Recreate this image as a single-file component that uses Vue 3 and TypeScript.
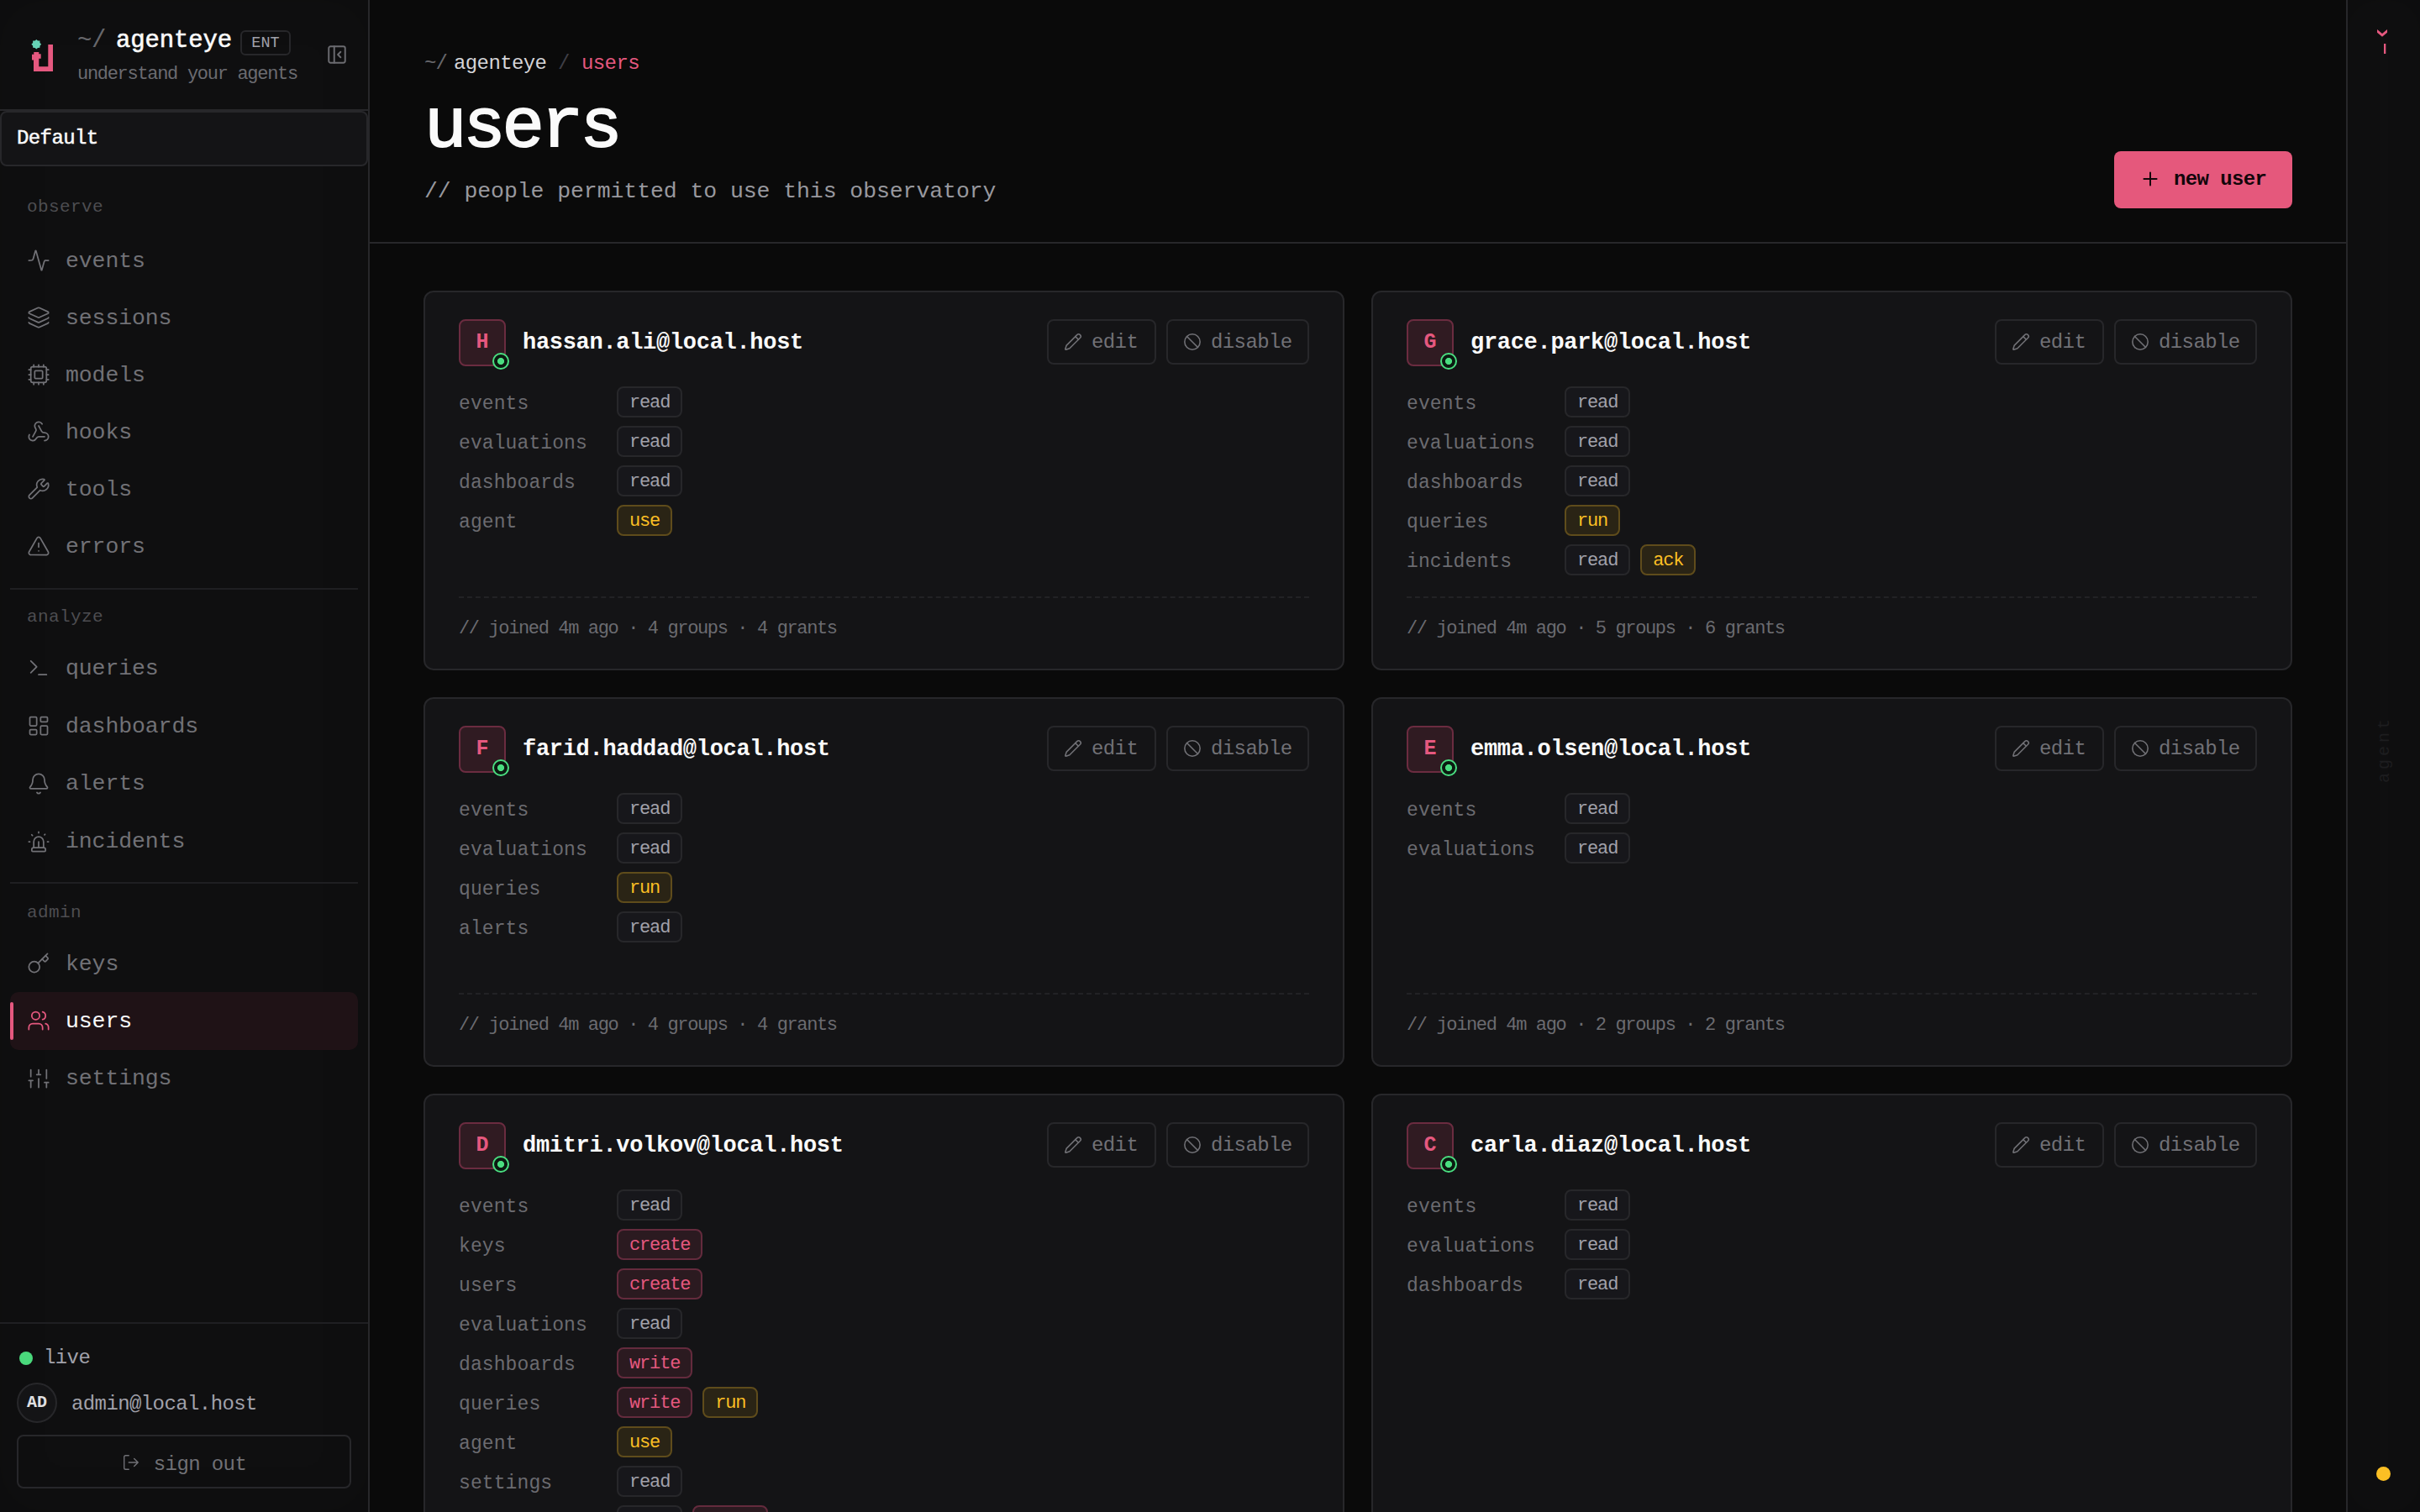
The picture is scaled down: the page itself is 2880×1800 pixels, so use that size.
<script setup lang="ts">
interface NavItem { label: string; icon: string; active?: boolean }
interface NavGroup { title: string; cls: string; items: NavItem[] }
interface Perm { group: string; grants: string[] }
interface User { email: string; perms: Perm[]; meta: string }

const icons: Record<string, string> = {
  activity: '<path d="M22 12h-2.48a2 2 0 0 0-1.93 1.46l-2.35 8.36a.25.25 0 0 1-.48 0L9.24 2.18a.25.25 0 0 0-.48 0l-2.35 8.36A2 2 0 0 1 4.49 12H2"/>',
  layers: '<path d="M12.83 2.18a2 2 0 0 0-1.66 0L2.6 6.08a1 1 0 0 0 0 1.83l8.58 3.91a2 2 0 0 0 1.66 0l8.58-3.9a1 1 0 0 0 0-1.83z"/><path d="M2 12a1 1 0 0 0 .58.91l8.6 3.91a2 2 0 0 0 1.65 0l8.58-3.9A1 1 0 0 0 22 12"/><path d="M2 17a1 1 0 0 0 .58.91l8.6 3.91a2 2 0 0 0 1.65 0l8.58-3.9A1 1 0 0 0 22 17"/>',
  cpu: '<path d="M12 20v2M12 2v2M17 20v2M17 2v2M2 12h2M2 17h2M2 7h2M20 12h2M20 17h2M20 7h2M7 20v2M7 2v2"/><rect x="4" y="4" width="16" height="16" rx="2"/><rect x="8" y="8" width="8" height="8" rx="1"/>',
  webhook: '<path d="M18 16.98h-5.99c-1.1 0-1.95.94-2.48 1.9A4 4 0 0 1 2 17c.01-.7.2-1.4.57-2"/><path d="m6 17 3.13-5.78c.53-.97.1-2.18-.5-3.1a4 4 0 1 1 6.89-4.06"/><path d="m12 6 3.13 5.73C15.66 12.7 16.9 13 18 13a4 4 0 0 1 0 8"/>',
  wrench: '<path d="M14.7 6.3a1 1 0 0 0 0 1.4l1.6 1.6a1 1 0 0 0 1.4 0l3.106-3.105c.32-.322.863-.22.983.218a6 6 0 0 1-8.259 7.057l-7.91 7.91a1 1 0 0 1-2.999-3l7.91-7.91a6 6 0 0 1 7.057-8.259c.438.12.54.662.219.984z"/>',
  alert: '<path d="m21.73 18-8-14a2 2 0 0 0-3.48 0l-8 14A2 2 0 0 0 4 21h16a2 2 0 0 0 1.73-3"/><path d="M12 9v4M12 17h.01"/>',
  terminal: '<path d="m4 17 6-6-6-6M12 19h8"/>',
  dashboard: '<rect x="3" y="3" width="7" height="9" rx="1"/><rect x="14" y="3" width="7" height="5" rx="1"/><rect x="14" y="12" width="7" height="9" rx="1"/><rect x="3" y="16" width="7" height="5" rx="1"/>',
  bell: '<path d="M10.268 21a2 2 0 0 0 3.464 0"/><path d="M3.262 15.326A1 1 0 0 0 4 17h16a1 1 0 0 0 .74-1.673C19.41 13.956 18 12.499 18 8A6 6 0 0 0 6 8c0 4.499-1.411 5.956-2.738 7.326"/>',
  siren: '<path d="M7 18v-6a5 5 0 1 1 10 0v6"/><path d="M5 21a1 1 0 0 0 1 1h12a1 1 0 0 0 1-1v-1a2 2 0 0 0-2-2H7a2 2 0 0 0-2 2z"/><path d="M21 12h1M18.5 4.5 18 5M2 12h1M12 2v1M4.929 4.929l.707.707M12 12v6"/>',
  key: '<path d="m15.5 7.5 2.3 2.3a1 1 0 0 0 1.4 0l2.1-2.1a1 1 0 0 0 0-1.4L19 4"/><path d="m21 2-9.6 9.6"/><circle cx="7.5" cy="15.5" r="5.5"/>',
  users: '<path d="M16 21v-2a4 4 0 0 0-4-4H6a4 4 0 0 0-4 4v2"/><circle cx="9" cy="7" r="4"/><path d="M22 21v-2a4 4 0 0 0-3-3.87M16 3.13a4 4 0 0 1 0 7.75"/>',
  sliders: '<path d="M4 21v-7M4 10V3M12 21v-9M12 8V3M20 21v-5M20 12V3M2 14h4M10 8h4M18 16h4"/>',
  panel: '<rect x="3" y="3" width="18" height="18" rx="2"/><path d="M9 3v18M16 15l-3-3 3-3"/>',
  logout: '<path d="m16 17 5-5-5-5M21 12H9M9 21H5a2 2 0 0 1-2-2V5a2 2 0 0 1 2-2h4"/>',
  plus: '<path d="M5 12h14M12 5v14"/>',
  pencil: '<path d="M21.174 6.812a1 1 0 0 0-3.986-3.987L3.842 16.174a2 2 0 0 0-.5.83l-1.321 4.352a.5.5 0 0 0 .623.622l4.353-1.32a2 2 0 0 0 .83-.497z"/><path d="m15 5 4 4"/>',
  ban: '<circle cx="12" cy="12" r="10"/><path d="m4.9 4.9 14.2 14.2"/>',
}

const groups: NavGroup[] = [
  { title: 'observe', cls: 'g-observe', items: [
    { label: 'events', icon: 'activity' }, { label: 'sessions', icon: 'layers' },
    { label: 'models', icon: 'cpu' }, { label: 'hooks', icon: 'webhook' },
    { label: 'tools', icon: 'wrench' }, { label: 'errors', icon: 'alert' },
  ] },
  { title: 'analyze', cls: 'g-analyze', items: [
    { label: 'queries', icon: 'terminal' }, { label: 'dashboards', icon: 'dashboard' },
    { label: 'alerts', icon: 'bell' }, { label: 'incidents', icon: 'siren' },
  ] },
  { title: 'admin', cls: 'g-admin', items: [
    { label: 'keys', icon: 'key' }, { label: 'users', icon: 'users', active: true },
    { label: 'settings', icon: 'sliders' },
  ] },
]

const p = (group: string, ...grants: string[]): Perm => ({ group, grants })

const users: User[] = [
  { email: 'hassan.ali@local.host', meta: '4 groups · 4 grants', perms: [p('events', 'read'), p('evaluations', 'read'), p('dashboards', 'read'), p('agent', 'use')] },
  { email: 'grace.park@local.host', meta: '5 groups · 6 grants', perms: [p('events', 'read'), p('evaluations', 'read'), p('dashboards', 'read'), p('queries', 'run'), p('incidents', 'read', 'ack')] },
  { email: 'farid.haddad@local.host', meta: '4 groups · 4 grants', perms: [p('events', 'read'), p('evaluations', 'read'), p('queries', 'run'), p('alerts', 'read')] },
  { email: 'emma.olsen@local.host', meta: '2 groups · 2 grants', perms: [p('events', 'read'), p('evaluations', 'read')] },
  { email: 'dmitri.volkov@local.host', meta: '', perms: [p('events', 'read'), p('keys', 'create'), p('users', 'create'), p('evaluations', 'read'), p('dashboards', 'write'), p('queries', 'write', 'run'), p('agent', 'use'), p('settings', 'read'), p('', 'read', 'write')] },
  { email: 'carla.diaz@local.host', meta: '', perms: [p('events', 'read'), p('evaluations', 'read'), p('dashboards', 'read')] },
]

const tone = (grant: string): string =>
  ['run', 'use', 'ack'].includes(grant) ? 'amber' : ['create', 'write'].includes(grant) ? 'pink' : 'plain'
</script>

<template>
  <div class="app">
    <aside class="sidebar">
      <header class="brand">
        <svg class="logo" viewBox="0 0 30 44" width="30" height="44">
          <path d="M7.3 2l1.7 1.6 2.4-.1.1 2.4 1.7 1.8-1.7 1.7-.1 2.4-2.4.1-1.7 1.7-1.7-1.7-2.4-.1-.1-2.4L1.4 7.700l1.700-1.800.1-2.400 2.400.1z" fill="#66d3b6" />
          <path d="M4.300 17h6v2.300h2.400v5.500h-2.400v9.500h11V8h5.700v32H4V26.500H2v-6.700h2.300z" fill="#e5587f" />
        </svg>
        <div class="brand-text">
          <div class="brand-row">
            <span class="tilde">~/</span><span class="name">agenteye</span><span class="ent">ENT</span>
          </div>
          <div class="tagline">understand your agents</div>
        </div>
        <svg class="ico collapse" viewBox="0 0 24 24" v-html="icons.panel" />
      </header>
      <div class="org"><span>Default</span></div>
      <nav class="nav">
        <section v-for="g in groups" :key="g.title" :class="['group', g.cls]">
          <div class="group-title">{{ g.title }}</div>
          <div class="items">
            <a v-for="i in g.items" :key="i.label" :class="['item', { active: i.active }]">
              <svg class="ico" viewBox="0 0 24 24" v-html="icons[i.icon]" />
              <span>{{ i.label }}</span>
            </a>
          </div>
        </section>
      </nav>
      <footer class="side-foot">
        <div class="live"><i></i><span>live</span></div>
        <div class="me"><b>AD</b><span>admin@local.host</span></div>
        <button class="signout"><svg class="ico" viewBox="0 0 24 24" v-html="icons.logout" /><span>sign out</span></button>
      </footer>
    </aside>

    <main class="main">
      <header class="head">
        <div>
          <div class="crumbs"><span class="c-root">~/</span><span class="c-app">agenteye</span><span class="c-sep">/</span><span class="c-here">users</span></div>
          <h1>users</h1>
          <p class="sub">// people permitted to use this observatory</p>
        </div>
        <button class="new"><svg class="ico" viewBox="0 0 24 24" v-html="icons.plus" /><span>new user</span></button>
      </header>
      <div class="grid">
        <article v-for="u in users" :key="u.email" class="card">
          <div class="card-head">
            <div class="avatar">{{ u.email[0].toUpperCase() }}<i class="dot"></i></div>
            <div class="email">{{ u.email }}</div>
            <button class="btn edit"><svg class="ico" viewBox="0 0 24 24" v-html="icons.pencil" /><span>edit</span></button>
            <button class="btn disable"><svg class="ico" viewBox="0 0 24 24" v-html="icons.ban" /><span>disable</span></button>
          </div>
          <div class="perms">
            <div v-for="(r, n) in u.perms" :key="n" class="perm">
              <span class="perm-name">{{ r.group }}</span>
              <span v-for="x in r.grants" :key="x" :class="['chip', tone(x)]">{{ x }}</span>
            </div>
          </div>
          <div v-if="u.meta" class="meta">// joined 4m ago · {{ u.meta }}</div>
        </article>
      </div>
    </main>

    <aside class="rail">
      <svg class="prompt" viewBox="0 0 16 32" width="16" height="32">
        <path d="M2 1v3.800L8 9.800l6-5V1L8 6z" fill="#e5587f" />
        <path d="M10 18h2.300v12H10z" fill="#e5587f" />
      </svg>
      <span class="rail-label">agent</span>
      <i class="rail-dot"></i>
    </aside>
  </div>
</template>

<style>
body { background: #0a0a0a; overflow: hidden; }
</style>

<style scoped>
.app { display: flex; width: 2880px; height: 1800px; overflow: hidden; background: #0a0a0a; font-family: "Liberation Mono", "DejaVu Sans Mono", monospace; color: #fafafa; font-size: 24px; letter-spacing: -.6px; }
.app *, .app { box-sizing: border-box; }
button { font-family: inherit; letter-spacing: inherit; background: none; padding: 0; margin: 0; }
.ico { width: 28px; height: 28px; flex: none; fill: none; stroke: currentColor; stroke-width: 1.5; stroke-linecap: round; stroke-linejoin: round; }

.sidebar { width: 440px; flex: none; display: flex; flex-direction: column; background: #0f0f10; border-right: 2px solid #27272a; box-shadow: inset 0 0 60px rgba(0, 0, 0, .14); }
.brand { height: 132px; flex: none; display: flex; align-items: flex-start; border-bottom: 2px solid #27272a; }
.logo { margin: 45px 0 0 36px; }
.brand-text { margin: 28px 0 0 26px; width: 296px; }
.brand-row { display: flex; height: 40px; line-height: 42px; font-size: 29px; white-space: nowrap; }
.tilde { color: #67676b; width: 46px; letter-spacing: -.3px; }
.name { width: 148px; letter-spacing: -.15px; -webkit-text-stroke: .6px currentColor; }
.ent { height: 30px; width: 60px; margin-top: 8px; line-height: 27px; border: 2px solid #27272a; border-radius: 6px; font-size: 18.500px; letter-spacing: .1px; color: #a1a1aa; text-align: center; }
.tagline { margin-top: 7px; line-height: 28px; font-size: 22px; letter-spacing: -1.300px; color: #6b6b70; white-space: nowrap; }
.collapse { width: 26px; height: 26px; stroke-width: 1.8; color: #6b6b70; margin-top: 52px; }
.org { height: 66px; flex: none; border: 2px solid #27272a; border-radius: 8px; background: #141416; padding: 13px 18px; line-height: 36px; -webkit-text-stroke: .5px currentColor; }
.nav { padding: 37px 12px 0; }
.group { padding-bottom: 16px; }
.group + .group { border-top: 2px solid #1f1f22; padding-top: 21px; }
.group-title { padding-left: 20px; font-size: 21px; line-height: 24px; letter-spacing: .4px; color: #4d4d51; margin-bottom: 14px; }
.g-observe .group-title { margin-bottom: 17px; }
.group.g-analyze { padding-bottom: 14px; }
.group.g-admin { padding-top: 23px; }
.items { display: flex; flex-direction: column; }
.g-observe .items { height: 408px; }
.g-analyze .items { height: 275px; }
.g-admin .items { height: 205px; }
.item { flex: 1 1 0; display: flex; align-items: center; gap: 18px; padding-left: 20px; color: #717176; font-size: 26.500px; letter-spacing: -.1px; border-radius: 10px; }
.item span { padding-top: 1px; }
.item.active { position: relative; background: #1f1216; color: #fafafa; }
.item.active .ico { color: #e5587f; }
.item.active::before { content: ""; position: absolute; left: 0; top: 12px; bottom: 12px; width: 4px; border-radius: 2px; background: #e5587f; }
.side-foot { margin-top: auto; height: 226px; border-top: 2px solid #1f1f22; padding: 25px 20px 0; color: #a1a1aa; }
.live { display: flex; align-items: center; height: 30px; }
.live i { width: 16px; height: 16px; border-radius: 50%; background: #4ad97c; margin: 1px 13px 0 3px; }
.me { display: flex; align-items: center; margin-top: 15px; height: 48px; }
.me b { width: 48px; height: 48px; flex: none; border: 2px solid #27272a; border-radius: 50%; background: #141416; color: #e0e0e2; font-size: 20px; letter-spacing: 0; line-height: 43px; text-align: center; }
.me span { margin: 2px 0 0 17px; }
.signout { display: flex; align-items: center; justify-content: center; gap: 16px; margin-top: 14px; width: 398px; height: 64px; border: 2px solid #27272a; border-radius: 8px; color: #717176; font-size: 24px; }
.signout .ico { width: 22px; height: 22px; margin-top: 2px; }
.signout span { padding-top: 6px; }

.main { flex: 1; min-width: 0; display: flex; flex-direction: column; }
.head { height: 290px; flex: none; display: flex; justify-content: space-between; align-items: flex-start; border-bottom: 2px solid #27272a; padding: 61px 64px 0 65px; }
.crumbs { display: flex; line-height: 30px; height: 30px; }
.c-root { color: #67676b; width: 35px; letter-spacing: -1px; }
.c-app { color: #d4d4d8; width: 124px; }
.c-sep { color: #3f3f46; width: 28px; }
.c-here { color: #e5587f; }
h1 { margin: 11px 0 0; height: 100px; line-height: 100px; font-size: 84px; font-weight: 400; letter-spacing: -4.100px; -webkit-text-stroke: 1.900px currentColor; }
.sub { margin: 8px 0 0; line-height: 36px; font-size: 26.500px; letter-spacing: -.08px; color: #98989e; }
.new { margin-top: 119px; width: 212px; height: 68px; border: 0; border-radius: 8px; background: #e5587c; color: #12060a; display: flex; align-items: center; padding: 0 0 2px 30px; gap: 15px; font-size: 24px; font-weight: 700; }
.new .ico { width: 26px; height: 26px; stroke-width: 1.800; }
.grid { display: grid; grid-template-columns: 1fr 1fr; grid-template-rows: 452px 440px 760px; gap: 32px; padding: 56px 64px 0; }
.card { display: flex; flex-direction: column; background: #141416; border: 2px solid #27272a; border-radius: 12px; padding: 32px 40px 0; }
.card-head { display: flex; align-items: flex-start; height: 56px; }
.avatar { position: relative; width: 56px; height: 56px; flex: none; border: 2px solid #6b2c40; border-radius: 8px; background: #301b22; color: #e5587f; font-size: 25px; font-weight: 700; letter-spacing: 0; line-height: 51px; text-align: center; }
.dot { position: absolute; right: -6px; bottom: -6px; width: 20px; height: 20px; border: 2px solid #4ade80; border-radius: 50%; background: radial-gradient(circle, #4ade80 3.700px, #0b1a11 4.400px); }
.email { flex: 1; padding-left: 20px; line-height: 57px; font-size: 27px; font-weight: 700; letter-spacing: -.3px; }
.btn { display: flex; align-items: center; height: 54px; margin-left: 12px; border: 2px solid #27272a; border-radius: 8px; padding-left: 18px; gap: 11px; color: #717176; font-size: 24px; }
.btn .ico { width: 22px; height: 22px; stroke-width: 1.700; }
.btn span { padding-top: 1px; }
.edit { width: 130px; }
.disable { width: 170px; }
.perms { display: flex; flex-direction: column; gap: 10px; margin-top: 24px; }
.perm { display: flex; height: 37px; }
.perm-name { width: 188px; line-height: 43px; font-size: 23px; letter-spacing: .1px; color: #6b6b70; }
.chip { height: 37px; line-height: 35px; margin-right: 12px; padding: 0 13px; border: 2px solid #27272a; border-radius: 8px; font-size: 22px; letter-spacing: -1.150px; background: #17171b; color: #a1a1aa; }
.chip.amber { background: #2a2415; border-color: #5f4c1b; color: #fbbf24; }
.chip.pink { background: #2b1a20; border-color: #642b3d; color: #e5587f; }
.meta { margin-top: auto; height: 86px; border-top: 2px dashed #222225; line-height: 24px; padding-top: 25px; font-size: 22px; letter-spacing: -1.370px; color: #6b6b70; }

.rail { width: 88px; flex: none; display: flex; flex-direction: column; align-items: center; justify-content: space-between; border-left: 2px solid #27272a; background: #0f0f10; box-shadow: inset 0 0 40px rgba(0, 0, 0, .14); padding: 34px 0 37px; }
.prompt { margin-right: 4px; }
.rail-label { writing-mode: vertical-rl; transform: rotate(180deg); margin-bottom: 28px; font-size: 20px; letter-spacing: 4px; color: #1d1d1f; }
.rail-dot { width: 17px; height: 17px; margin-right: 1px; border-radius: 50%; background: #fbbf24; }
</style>
